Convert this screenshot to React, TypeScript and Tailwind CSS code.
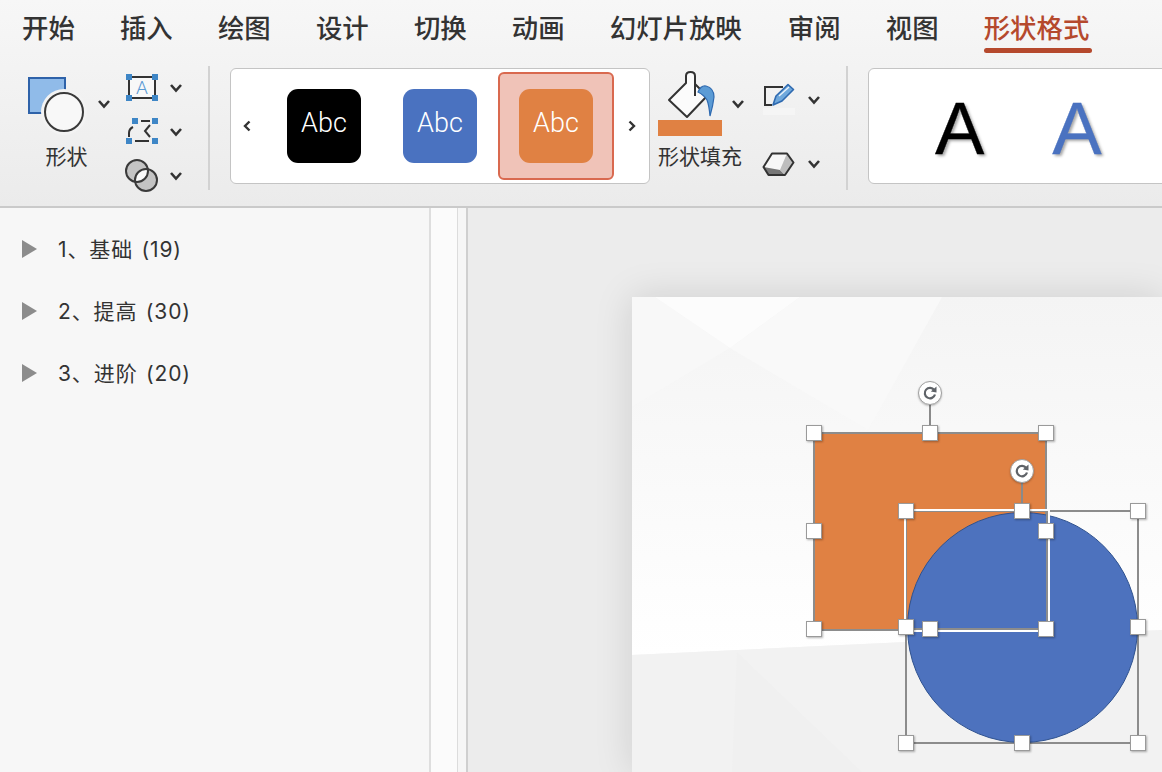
import React from "react";

const tabs = ["开始", "插入", "绘图", "设计", "切换", "动画", "幻灯片放映", "审阅", "视图"];
const outline = ["1、基础 (19)", "2、提高 (30)", "3、进阶 (20)"];

// handle centres, relative to the slide's top left corner
const rectHandles = [
  [182, 136], [298, 136], [414, 136],
  [182, 234], [414, 234],
  [182, 332], [298, 332], [414, 332],
];
const circleHandles = [
  [274, 214], [390, 214], [506, 214],
  [274, 330], [506, 330],
  [274, 446], [390, 446], [506, 446],
];

function Chev({ x, y }: { x: number; y: number }) {
  return (
    <path
      d={`M${x - 5} ${y - 3}L${x} ${y + 2.5}L${x + 5} ${y - 3}`}
      fill="none"
      stroke="#333"
      strokeWidth="2.6"
    />
  );
}

function SideChevron({ flip }: { flip?: boolean }) {
  return (
    <svg width="10" height="14" viewBox="0 0 10 14" className="shrink-0">
      <path
        d={flip ? "M2.5 2.5L7 7L2.5 11.5" : "M7.5 2.5L3 7L7.5 11.5"}
        fill="none"
        stroke="#333"
        strokeWidth="2.4"
      />
    </svg>
  );
}

function Swatch({ color }: { color: string }) {
  return (
    <div
      className="w-[74px] h-[74px] shrink-0 rounded-[11px] flex items-center justify-center pb-[5px] text-white text-[27px] font-light [font-family:Roboto,sans-serif]"
      style={{ backgroundColor: color }}
    >
      Abc
    </div>
  );
}

function Separator() {
  return <div className="w-[2px] h-[124px] -mt-[2px] bg-[#d2d2d2] shrink-0" />;
}

function BigShapeIcon() {
  return (
    <svg width="89" height="70" viewBox="22 68 89 70">
      <rect x="29" y="78" width="36" height="35" fill="#90bbe9" stroke="#2e62a9" strokeWidth="2" />
      <circle cx="64" cy="112" r="23" fill="#f3f3f3" />
      <circle cx="64" cy="112" r="19" fill="#f8f8f8" stroke="#3a3a3a" strokeWidth="2" />
      <Chev x={104} y={104} />
    </svg>
  );
}

function ShapeTools() {
  const blue = "#3e86c6";
  return (
    <svg width="70" height="124" viewBox="120 68 70 124">
      <rect x="129" y="77" width="26" height="21" fill="#f8f8f8" stroke="#333" strokeWidth="2" />
      {[[129, 77], [155, 77], [129, 98], [155, 98]].map(([x, y]) => (
        <rect key={`${x}-${y}`} x={x - 3} y={y - 3} width="6" height="6" fill={blue} />
      ))}
      <text x="142" y="94" textAnchor="middle" fontSize="19" fill="#5b9bd5" fontFamily="Roboto" fontWeight="300">A</text>
      <Chev x={176} y={88} />

      <path
        d="M141 121H150M150 125L145 131L150 137M149 141H135M129 137V133Q129 129 133 127"
        fill="none"
        stroke="#333"
        strokeWidth="2"
      />
      {[[135, 121], [155, 121], [129, 141], [155, 141]].map(([x, y]) => (
        <rect key={`${x}-${y}`} x={x - 3} y={y - 3} width="6" height="6" fill={blue} />
      ))}
      <Chev x={176} y={132} />

      <defs>
        <clipPath id="merge-clip">
          <circle cx="137" cy="171" r="11" />
        </clipPath>
      </defs>
      <circle cx="137" cy="171" r="11" fill="#c4c4c4" />
      <circle cx="146" cy="180" r="11" fill="#c4c4c4" />
      <circle cx="146" cy="180" r="11" fill="#fafafa" clipPath="url(#merge-clip)" />
      <circle cx="137" cy="171" r="11" fill="none" stroke="#3a3a3a" strokeWidth="2" />
      <circle cx="146" cy="180" r="11" fill="none" stroke="#3a3a3a" strokeWidth="2" />
      <Chev x={176} y={176} />
    </svg>
  );
}

function FillIcon() {
  return (
    <svg width="90" height="70" viewBox="658 68 90 70">
      <path
        d="M669 100L686 83V76Q686 72 690.5 72Q695 72 695 76V84L707 96L687 117Z"
        fill="#fbfbfb"
        stroke="#333"
        strokeWidth="2"
        strokeLinejoin="round"
      />
      <path d="M695 80V96" stroke="#333" strokeWidth="2" />
      <path
        d="M698 92Q701 85 706 86Q714 88 714 97Q713 106 710 116Q709 105 707 100Q704 95 698 92Z"
        fill="#5b9bd5"
        stroke="#2f6ab0"
        strokeWidth="1.2"
      />
      <rect x="658" y="120" width="64" height="16" fill="#e08143" />
      <Chev x={738} y={104} />
    </svg>
  );
}

function OutlineTools() {
  return (
    <svg width="82" height="122" viewBox="748 68 82 122">
      <rect x="763" y="108" width="32" height="7" fill="#f5f5f5" />
      <path d="M783 87H765V105H772" fill="none" stroke="#333" strokeWidth="2" />
      <path d="M773 105L776 96L788 84.5L793.5 89.5L782 101Z" fill="#6fa8dc" stroke="#2f6ab0" strokeWidth="1.6" strokeLinejoin="round" />
      <path d="M779 96L789 87" stroke="#eaf2fa" strokeWidth="1.4" />
      <Chev x={814} y={100} />

      <path d="M763.5 167L772 153.5H787L780 170Z" fill="#f7f7f7" />
      <path d="M763.5 167L780 170L785 175H768.5Z" fill="#777" />
      <path d="M787 153.5L793.5 162.5L785 175L780 170Z" fill="#bdbdbd" />
      <path d="M763.5 167L772 153.5H787L793.5 162.5L785 175H768.5Z" fill="none" stroke="#333" strokeWidth="2" strokeLinejoin="round" />
      <Chev x={814} y={164} />
    </svg>
  );
}

function Ribbon() {
  return (
    <div className="h-[208px] shrink-0 overflow-hidden border-b-2 border-[#cacaca] bg-gradient-to-b from-[#f7f7f7] to-[#ebebeb]">
      <div className="flex h-[68px] gap-[45.2px] pl-[22px] pt-[10px] text-[26.4px] leading-[38px] font-medium text-[#333]">
        {tabs.map((t) => (
          <span key={t} className={t === "幻灯片放映" ? "w-[132.8px]" : ""}>
            {t}
          </span>
        ))}
        <div className="flex flex-col w-[108px] shrink-0 text-[#b5492d]">
          <span>形状格式</span>
          <div className="h-[5px] rounded-full bg-[#b5492d]" />
        </div>
      </div>

      <div className="flex items-start w-[1162px]">
        <div className="flex flex-col items-center w-[89px] ml-[22px] shrink-0">
          <BigShapeIcon />
          <span className="mt-[5px] text-[21px] leading-[28px] text-[#333]">形状</span>
        </div>
        <div className="ml-[9px] shrink-0">
          <ShapeTools />
        </div>
        <div className="ml-[18px] shrink-0">
          <Separator />
        </div>

        <div className="flex items-center w-[420px] h-[116px] ml-[20px] shrink-0 rounded-[6px] border border-[#c4c4c4] bg-white pl-[11px]">
          <SideChevron />
          <div className="ml-[35px]">
            <Swatch color="#000000" />
          </div>
          <div className="ml-[42px]">
            <Swatch color="#4a72c0" />
          </div>
          <div className="ml-[21px] flex items-center justify-center w-[116px] h-[108px] shrink-0 rounded-[6px] border-2 border-[#d9694f] bg-[#f0c3b8]">
            <Swatch color="#e08143" />
          </div>
          <div className="ml-[13px]">
            <SideChevron flip />
          </div>
        </div>

        <div className="flex flex-col w-[90px] ml-[8px] shrink-0">
          <FillIcon />
          <span className="mt-[5px] text-[21px] leading-[28px] text-[#333] whitespace-nowrap">形状填充</span>
        </div>
        <div className="shrink-0">
          <OutlineTools />
        </div>
        <div className="ml-[16px] shrink-0">
          <Separator />
        </div>

        <div className="flex items-center w-[320px] h-[116px] ml-[20px] shrink-0 rounded-[6px] border border-[#c4c4c4] bg-white pl-[66px] gap-[68px] text-[74px] leading-none [font-family:'Liberation_Sans',sans-serif] [-webkit-text-stroke:0.3px_currentColor] [text-shadow:2px_2px_3px_rgba(0,0,0,0.35)]">
          <span className="text-black pt-[5px]">A</span>
          <span className="text-[#4a72c0] pt-[5px]">A</span>
        </div>
      </div>
    </div>
  );
}

function Handle({ x, y }: { x: number; y: number }) {
  return (
    <div
      className="absolute w-[16px] h-[16px] -ml-[8px] -mt-[8px] bg-white border border-[#9a9a9a] shadow-[1px_1px_2px_rgba(0,0,0,0.3)]"
      style={{ left: x, top: y }}
    />
  );
}

function RotateHandle({ x, y, len }: { x: number; y: number; len: number }) {
  return (
    <>
      <div className="absolute w-[2px] -ml-[1px] bg-[#8a8a8a]" style={{ left: x, top: y, height: len }} />
      <div
        className="absolute w-[24px] h-[24px] -ml-[12px] -mt-[12px] rounded-full bg-white border-[1.5px] border-[#a0a0a0] flex items-center justify-center shadow-[0_1px_2px_rgba(0,0,0,0.25)]"
        style={{ left: x, top: y }}
      >
        <svg width="16" height="16" viewBox="0 0 16 16">
          <path d="M12.2 5A5.2 5.2 0 1 0 13 9.5" fill="none" stroke="#5f6368" strokeWidth="2.2" />
          <polygon points="14.5,1.5 14.5,7.5 8.8,6.5" fill="#5f6368" />
        </svg>
      </div>
    </>
  );
}

function Slide() {
  return (
    <div className="relative w-[530px] h-[475px] bg-[#f5f5f5] shadow-[0_0_36px_rgba(0,0,0,0.13)]">
      {/* faceted slide background */}
      <svg className="absolute inset-0" width="530" height="475" viewBox="0 0 530 475">
        <defs>
          <linearGradient id="mid-face" x1="0" y1="0" x2="0" y2="1">
            <stop offset="0" stopColor="#f4f4f4" />
            <stop offset="1" stopColor="#ffffff" />
          </linearGradient>
        </defs>
        <polygon points="0,110 98,51 236,133 310,0 530,0 530,333 0,358" fill="url(#mid-face)" />
        <polygon points="0,0 0,110 98,51 23,0" fill="#f8f8f8" />
        <polygon points="23,0 168,0 98,51" fill="#fcfcfc" />
        <polygon points="168,0 310,0 236,133 98,51" fill="#f9f9f9" />
        <polygon points="0,358 530,333 530,475 0,475" fill="#f2f2f2" />
        <polygon points="105,355 230,475 100,475" fill="#f0f0f0" />
      </svg>

      {/* orange square */}
      <div className="absolute left-[181px] top-[135px] w-[234px] h-[199px] bg-[#e08143] border-2 border-[#8c8c8c]" />
      {/* blue circle and its selection box */}
      <div className="absolute left-[273px] top-[213px] w-[234px] h-[234px] border-2 border-[#8c8c8c]" />
      <div className="absolute left-[275px] top-[215px] w-[231px] h-[231px] rounded-full bg-[#4d72be] border-[1.5px] border-[#2f528f]" />
      {/* square's selection line over the circle */}
      <div className="absolute left-[272px] top-[212px] w-[146px] h-[123px] border-2 border-white" />
      <div className="absolute left-[414px] top-[214px] w-[2px] h-[118px] bg-[#8c8c8c]" />
      <div className="absolute left-[274px] top-[331px] w-[140px] h-[2px] bg-[#8c8c8c]" />

      <RotateHandle x={298} y={96} len={40} />
      <RotateHandle x={390} y={174} len={40} />
      {rectHandles.map(([x, y]) => (
        <Handle key={`r${x}-${y}`} x={x} y={y} />
      ))}
      {circleHandles.map(([x, y]) => (
        <Handle key={`c${x}-${y}`} x={x} y={y} />
      ))}
    </div>
  );
}

export default function App() {
  return (
    <div className="w-[1162px] h-[772px] overflow-hidden flex flex-col [font-family:'Liberation_Sans','Noto_Sans_CJK_SC',sans-serif]">
      <Ribbon />
      <div className="flex flex-1 min-h-0">
        <div className="w-[431px] shrink-0 border-r-2 border-[#dedede] bg-[#f7f7f7] pl-[22px] pt-[10px]">
          {outline.map((item) => (
            <div key={item} className="flex items-center h-[62px] text-[21px] tracking-[0.9px] [word-spacing:1.5px] text-[#333] [font-family:Inter,'Noto_Sans_CJK_SC',sans-serif]">
              <svg width="15" height="18" viewBox="0 0 15 18" className="shrink-0">
                <polygon points="0,0 15,9 0,18" fill="#8c8c8c" />
              </svg>
              <span className="ml-[21px] pt-[1px]">{item}</span>
            </div>
          ))}
        </div>
        <div className="w-[27px] shrink-0 border-r border-[#dcdcdc] bg-[#fbfbfb]" />
        <div className="w-[10px] shrink-0 border-r-2 border-[#cfcfcf] bg-[#f6f6f6]" />
        <div className="flex-1 overflow-hidden bg-[#ececec] pl-[164px] pt-[89px]">
          <Slide />
        </div>
      </div>
    </div>
  );
}
